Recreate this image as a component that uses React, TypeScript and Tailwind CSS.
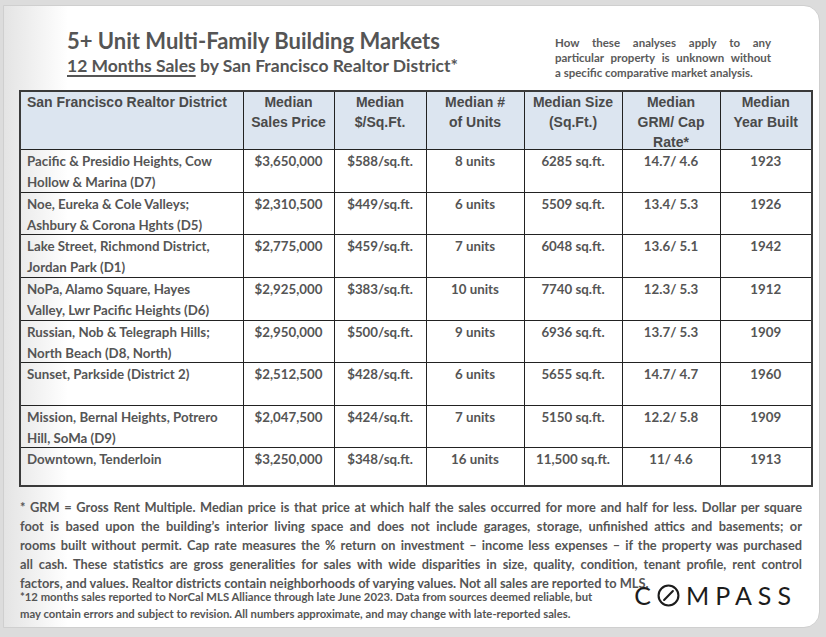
const cols = [223, 91, 92, 98, 98, 98, 92];

const head = [
  ["San Francisco Realtor District"],
  ["Median", "Sales Price"],
  ["Median", "$/Sq.Ft."],
  ["Median #", "of Units"],
  ["Median Size", "(Sq.Ft.)"],
  ["Median", "GRM/ Cap", "Rate*"],
  ["Median", "Year Built"],
];

const rows = [
  { h: 43, district: ["Pacific & Presidio Heights, Cow", "Hollow & Marina (D7)"], vals: ["$3,650,000", "$588/sq.ft.", "8 units", "6285 sq.ft.", "14.7/ 4.6", "1923"] },
  { h: 42, district: ["Noe, Eureka & Cole Valleys;", "Ashbury & Corona Hghts (D5)"], vals: ["$2,310,500", "$449/sq.ft.", "6 units", "5509 sq.ft.", "13.4/ 5.3", "1926"] },
  { h: 43, district: ["Lake Street, Richmond District,", "Jordan Park (D1)"], vals: ["$2,775,000", "$459/sq.ft.", "7 units", "6048 sq.ft.", "13.6/ 5.1", "1942"] },
  { h: 43, district: ["NoPa, Alamo Square, Hayes", "Valley, Lwr Pacific Heights (D6)"], vals: ["$2,925,000", "$383/sq.ft.", "10 units", "7740 sq.ft.", "12.3/ 5.3", "1912"] },
  { h: 42, district: ["Russian, Nob & Telegraph Hills;", "North Beach (D8, North)"], vals: ["$2,950,000", "$500/sq.ft.", "9 units", "6936 sq.ft.", "13.7/ 5.3", "1909"] },
  { h: 43, district: ["Sunset, Parkside (District 2)"], vals: ["$2,512,500", "$428/sq.ft.", "6 units", "5655 sq.ft.", "14.7/ 4.7", "1960"] },
  { h: 42, district: ["Mission, Bernal Heights, Potrero", "Hill, SoMa (D9)"], vals: ["$2,047,500", "$424/sq.ft.", "7 units", "5150 sq.ft.", "12.2/ 5.8", "1909"] },
  { h: 38, district: ["Downtown, Tenderloin"], vals: ["$3,250,000", "$348/sq.ft.", "16 units", "11,500 sq.ft.", "11/ 4.6", "1913"] },
];

const notes = [
  "* GRM = Gross Rent Multiple. Median price is that price at which half the sales occurred for more and half for less. Dollar per square",
  "foot is based upon the building’s interior living space and does not include garages, storage, unfinished attics and basements; or",
  "rooms built without permit. Cap rate measures the % return on investment – income less expenses – if the property was purchased",
  "all cash. These statistics are gross generalities for sales with wide disparities in size, quality, condition, tenant profile, rent control",
];

function CompassO() {
  return (
    <svg width="23" height="23" viewBox="0 0 22 22" className="mr-[6px]">
      <circle cx="11" cy="11" r="9.5" fill="none" stroke="#1c1c1c" strokeWidth="2" />
      <line x1="6.8" y1="15.2" x2="15.2" y2="6.8" stroke="#1c1c1c" strokeWidth="2" strokeLinecap="round" />
    </svg>
  );
}

export default function App() {
  return (
    <div className="w-[826px] h-[637px] bg-[#dcdcdc] pl-[3px] pt-[5px] pr-[6px] pb-[9px] flex">
      <div className="flex-1 flex flex-col rounded-r-[16px] border border-[#cfcfcf] bg-[linear-gradient(to_right,#e4e4e4,#ffffff_64px)] font-['Lato',sans-serif] text-[#555]">
        <div className="flex items-start pl-[63px] pt-[22px]">
          <div className="flex flex-col font-bold">
            <div className="text-[22px] leading-[26px]">5+ Unit Multi-Family Building Markets</div>
            <div className="text-[17.5px] leading-[22px] mt-[1px]">
              <span className="underline underline-offset-[3px] decoration-[1.5px]">12 Months Sales</span> by San Francisco Realtor District*
            </div>
          </div>
          <div className="ml-auto mr-[48px] mt-[7px] w-[216px] text-[11.5px] leading-[15px] font-bold text-[#5a5a5a]">
            <div className="text-justify [text-align-last:justify]">How these analyses apply to any</div>
            <div className="text-justify [text-align-last:justify]">particular property is unknown without</div>
            <div>a specific comparative market analysis.</div>
          </div>
        </div>

        <table className="ml-[15px] mt-[10px] w-[792px] table-fixed border-collapse border-2 border-[#3a3a3a]">
          <colgroup>
            {cols.map((w, i) => (
              <col key={i} style={{ width: w }} />
            ))}
          </colgroup>
          <thead>
            <tr className="bg-[#dce5f0]">
              {head.map((lines, i) => (
                <th
                  key={i}
                  className={`border border-[#222] align-top p-0 font-['Liberation_Sans',Arial,sans-serif] text-[14px] leading-[20px] font-bold text-[#4a4a4a] ${i === 0 ? "text-left pl-[6px]" : "text-center"}`}
                >
                  <div className="h-[57px]">
                    {lines.map((l) => (
                      <div key={l}>{l}</div>
                    ))}
                  </div>
                </th>
              ))}
            </tr>
          </thead>
          <tbody>
            {rows.map((r) => (
              <tr key={r.vals[0]}>
                <td className="border border-[#222] align-top p-0 pl-[6px] text-[13.3px] leading-[21px] font-bold whitespace-nowrap">
                  <div className="pt-[1px]" style={{ height: r.h - 1 }}>
                    {r.district.map((l) => (
                      <div key={l}>{l}</div>
                    ))}
                  </div>
                </td>
                {r.vals.map((v, i) => (
                  <td key={i} className="border border-[#222] align-top p-0 text-center text-[13.3px] leading-[21px] font-bold whitespace-nowrap">
                    <div className="pt-[1px]" style={{ height: r.h - 1 }}>
                      {v}
                    </div>
                  </td>
                ))}
              </tr>
            ))}
          </tbody>
        </table>

        <div className="ml-[16px] mt-[11px] w-[782px] text-[12.8px] leading-[19px] font-bold text-[#555]">
          {notes.map((n) => (
            <div key={n} className="text-justify [text-align-last:justify] whitespace-nowrap">
              {n}
            </div>
          ))}
          <div>factors, and values. Realtor districts contain neighborhoods of varying values. Not all sales are reported to MLS.</div>
        </div>

        <div className="flex items-start ml-[16px] mt-[-5px]">
          <div className="text-[11.3px] leading-[17px] font-bold text-[#555]">
            <div>*12 months sales reported to NorCal MLS Alliance through late June 2023. Data from sources deemed reliable, but</div>
            <div>may contain errors and subject to revision. All numbers approximate, and may change with late-reported sales.</div>
          </div>
          <div className="ml-auto mr-[22px] mt-[-7px] flex items-center text-[#1c1c1c] font-['Lato',sans-serif] text-[25px] leading-[28px] tracking-[6px]">
            <span>C</span>
            <CompassO />
            <span>MPASS</span>
          </div>
        </div>
      </div>
    </div>
  );
}
